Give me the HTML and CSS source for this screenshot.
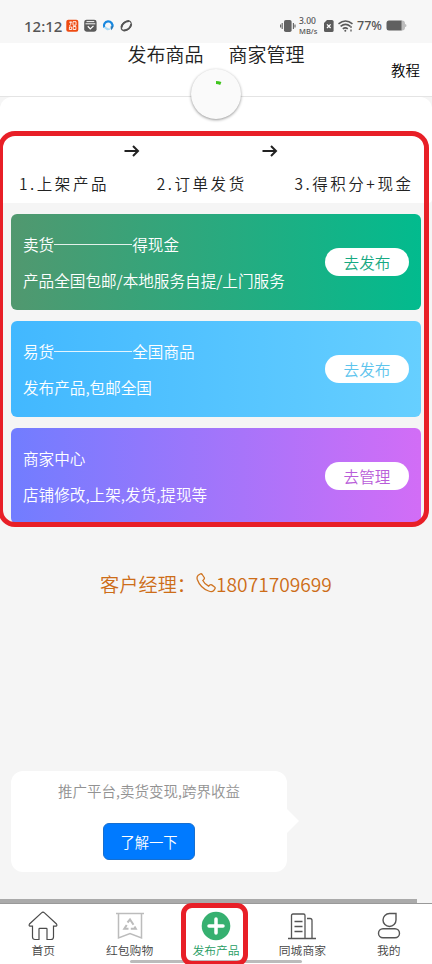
FILE: index.html
```html
<!DOCTYPE html>
<html lang="zh-CN">
<head>
<meta charset="utf-8">
<title>发布产品</title>
<link rel="stylesheet" href="styles.css">
</head>
<body>
<div class="screen">
  <div class="status">
    <span class="time">12:12</span>
    <svg class="status-left" width="68" height="14" viewBox="0 0 68 14">
      <rect x="0.3" y="0.7" width="12" height="12" rx="2" fill="#ee4b12"/>
      <g fill="none" stroke="#fff" stroke-width="0.9"><path d="M3.2 3.2H6M4.8 2.5v3.3L3 7.3M7 2.7v3.5h3V2.700zM3.500 8h2.200v2.500H3.300zM7.200 7.500h2.700v3H7.200z"/></g>
      <rect x="18.2" y="0.7" width="12.4" height="12" rx="2.4" fill="#5b5b5b"/>
      <path d="M20.5 2.6h7.8M19.5 4.8h9.8" stroke="#f7f7f7" stroke-width="1"/>
      <path d="M21.8 7.3l2.5 2.6 3.2-3" fill="none" stroke="#fff" stroke-width="1.3"/>
      <path d="M38.300 8.500A4.300 4.300 0 1 1 46.300 8" fill="none" stroke="#1787df" stroke-width="2.200"/>
      <path d="M37.500 8.500q1.500-1.700 3.500 0 2 1.700 4.500.500-1.700 2.900-4.900 2.100z" fill="#a8dbf7"/>
      <path d="M44.500 7.500l2.700-.5q.3 2.700-2 4.300z" fill="#2878b8"/>
      <g fill="none" stroke="#555"><ellipse cx="60.300" cy="6.800" rx="5.800" ry="3.900" transform="rotate(-43 60.300 6.800)" stroke-width="1.200"/><path d="M55.500 8.500C56 5 59 2.300 63 2M65.200 5.200C64.700 8.600 61.600 11.300 57.600 11.600" stroke-width="2"/></g>
    </svg>
    <svg class="vibrate" width="16" height="14" viewBox="0 0 16 14"><rect x="4" y="1" width="7.6" height="12" rx="1.8" fill="#626262"/><path d="M2.2 4v6M.6 5.5v3M13.4 4v6M15 5.5v3" stroke="#626262" stroke-width="1.1"/></svg>
    <span class="speed"><span>3.00</span><span>MB/s</span></span>
    <svg class="signal" width="30" height="14" viewBox="0 0 30 14"><path d="M1 4l3-3h5q1.600 0 1.600 1.600v8.800q0 1.600-1.600 1.600H2.600Q1 13 1 11.400z" fill="#5c5c5c"/><path d="M4 5.400l3.600 3.600M7.600 5.400l-3.600 3.600" stroke="#fff" stroke-width="1.300"/><g fill="none" stroke="#5a5a5a" stroke-width="1.600"><path d="M15.500 4.800q7-5.600 14 0M17.600 7.400q4.900-4 9.800 0M19.800 9.900q2.500-2 5 0"/></g><circle cx="22.300" cy="11.700" r="1" fill="#5a5a5a"/><path d="M28 7v2M28 10.500v2" stroke="#5a5a5a" stroke-width="1.300"/></svg>
    <span class="percent">77%</span>
    <svg class="battery" width="21" height="11" viewBox="0 0 21 11"><path d="M15 .5h1q3 0 3 3v.5q1.500 0 1.500 1.500T19 7v.5q0 3-3 3h-1z" fill="#bcbcbc"/><path d="M3 .500h12.500v10H3q-2.500 0-2.500-2.500V3Q.500.500 3 .500z" fill="#606060"/></svg>
  </div>
  <header class="header">
    <div class="tabs"><span>发布商品</span><span>商家管理</span></div>
    <a class="tutorial">教程</a>
    <div class="loader"><svg width="50" height="50" viewBox="0 0 50 50"><path d="M25 13.500q2.500 0 4.800 1" fill="none" stroke="#3fc51d" stroke-width="3"/></svg></div>
  </header>
  <section class="steps">
    <div class="arrows">
      <svg width="16" height="12" viewBox="0 0 16 12"><path d="M.5 6H14M9 1l5 5-5 5" fill="none" stroke="#222" stroke-width="2"/></svg>
      <svg width="16" height="12" viewBox="0 0 16 12"><path d="M.5 6H14M9 1l5 5-5 5" fill="none" stroke="#222" stroke-width="2"/></svg>
    </div>
    <div class="labels"><span>1.上架产品</span><span>2.订单发货</span><span>3.得积分+现金</span></div>
  </section>
  <main class="cards">
    <section class="card green"><div><p>卖货<i class="dash"></i>得现金</p><p>产品全国包邮/本地服务自提/上门服务</p></div><a class="pill">去发布</a></section>
    <section class="card blue"><div><p>易货<i class="dash"></i>全国商品</p><p>发布产品,包邮全国</p></div><a class="pill">去发布</a></section>
    <section class="card purple"><div><p>商家中心</p><p>店铺修改,上架,发货,提现等</p></div><a class="pill">去管理</a></section>
  </main>
  <div class="contact"><span>客户经理：</span><svg width="20" height="20" viewBox="0 0 20 20"><path d="M2.200 2.200L4.200 1q1.200-.6 2 .5l2 3q.6 1-.3 1.900L6.800 7.500q2 3.800 5.800 5.700l1.200-1.200q.9-.8 1.900-.1l2.900 2q1 .8.300 1.900l-1.300 2q-1.600 1.600-5 .2Q4.200 14.800 1.300 6.500.500 3.700 2.200 2.200z" fill="none" stroke="#cf7320" stroke-width="1.300"/></svg><span>18071709699</span></div>
  <section class="bubble"><p>推广平台,卖货变现,跨界收益</p><a class="learn">了解一下</a></section>
  <div class="progress"></div>
  <nav class="nav">
    <a class="item"><svg width="30" height="30" viewBox="0 0 30 30"><path d="M15 1.200q.8 0 1.500.7L28.500 13q1 1.500-.5 2.200h-2.500V26q0 2.500-2.500 2.500h-4V18q0-.7-.7-.7h-6.600q-.7 0-.7.700v10.500H7q-2.500 0-2.500-2.500V15.200H2q-1.500-.7-.5-2.200l12-11.100q.7-.7 1.500-.7z" fill="none" stroke="#4b4b4b" stroke-width="1.200"/></svg><span>首页</span></a>
    <a class="item"><svg width="30" height="30" viewBox="0 0 30 30"><g fill="none" stroke="#bcbcbc"><path d="M1 2.500h28" stroke-width="1.500"/><path d="M3.500 2.500V27L15 22.500 26.500 27V2.500" stroke-width="1.500"/><path d="M12.500 11.500l2.500-3 3.500 5.300M19.500 15.500l1.300 2.200h-5M13.500 17.700H9.300l2.400-3.700" stroke-width="2"/></g></svg><span>红包购物</span></a>
    <a class="item active"><svg width="30" height="30" viewBox="0 0 30 30"><circle cx="15" cy="15" r="14.300" fill="#36b070"/><path d="M15 8v14M8 15h14" stroke="#fff" stroke-width="3.500" stroke-linecap="round"/></svg><span>发布产品</span></a>
    <a class="item"><svg width="30" height="30" viewBox="0 0 30 30"><g fill="none" stroke="#555" stroke-width="1.300"><path d="M1 27.500h28M4.500 27.500v-23q0-1.500 1.500-1.500h10.500Q18 3 18 4.500v23M20 7.500h3q2 0 2 2v18M7.500 10.500h8M7.500 15.500h8M7.500 20.500h8"/></g></svg><span>同城商家</span></a>
    <a class="item"><svg width="30" height="30" viewBox="0 0 30 30"><g fill="none" stroke="#555" stroke-width="1.400"><path d="M22 2.500v6.500a6.500 6.500 0 1 1-6.500-6.500z"/><rect x="4.500" y="17.700" width="21" height="9" rx="4.500"/></g></svg><span>我的</span></a>
    <div class="indicator"></div>
  </nav>
  <div class="mark mark-main"></div>
  <div class="mark mark-tab"></div>
</div>
</body>
</html>
```
FILE: styles.css
```css
* { box-sizing: border-box; }
body, p { margin: 0; }
body { background: #f5f5f5; font-family: "Noto Sans CJK SC", sans-serif; font-weight: 350; color: #222; }
svg { display: block; flex: none; }
.screen { position: relative; width: 432px; height: 964px; overflow: hidden; display: flex; flex-direction: column; background: #f5f5f5; }
.screen > * { flex-shrink: 0; }

.status { height: 43px; background: #f7f7f7; padding: 8px 24px 0 24px; display: flex; align-items: center; color: #555; }
.time { font: 500 15px/20px "Noto Sans", sans-serif; width: 42px; white-space: nowrap; }
.vibrate { margin-left: 146px; }
.speed { display: flex; flex-direction: column; justify-content: space-between; height: 18px; width: 20px; margin-left: 3px; font: 500 7.500px/8px "Noto Sans", sans-serif; }
.speed span:first-child { font-size: 8.500px; line-height: 8px; }
.signal { margin-left: 4px; }
.percent { font: 500 12.500px/20px "Noto Sans", sans-serif; margin-left: 4px; width: 29px; }
.battery { flex: none; }

.header { position: relative; height: 54px; background: #fff; border-bottom: 1px solid #e4e4e4; }
.tabs { display: flex; justify-content: center; gap: 25px; font-size: 19px; line-height: 21px; }
.tutorial { position: absolute; right: 12px; top: 17px; font-size: 14.500px; line-height: 20px; color: #000; }
.loader { position: absolute; left: 191px; top: 26px; width: 50px; height: 50px; border-radius: 50%; background: #fafafa; box-shadow: 0 1px 3px rgba(0,0,0,.42); z-index: 2; }

.steps { height: 106px; background: #fff; border-radius: 12px 12px 4px 4px; padding: 48px 18.500px 0 19px; }
.arrows { display: flex; gap: 122px; padding-left: 105px; }
.labels { display: flex; justify-content: space-between; margin-top: 16px; font-size: 15.500px; line-height: 20px; letter-spacing: 2.550px; white-space: nowrap; }

.cards { padding: 11px 11px 0; display: flex; flex-direction: column; gap: 11px; }
.card { height: 96px; border-radius: 6px; padding: 12px; display: flex; justify-content: space-between; align-items: center; color: #fff; font-size: 15.600px; line-height: 36px; white-space: nowrap; }
.green { background: linear-gradient(90deg, #51986f, #02bb8e); }
.blue { background: linear-gradient(90deg, #42b8ff, #66cfff); }
.purple { background: linear-gradient(90deg, #717dff, #d26df6); }
.dash { display: inline-block; width: 78px; height: 1px; background: rgba(255,255,255,.85); vertical-align: 6px; }
.pill { width: 84px; height: 28px; border-radius: 14px; background: #fff; text-align: center; line-height: 29px; }
.green .pill { color: #16a982; }
.blue .pill { color: #5dc4ed; }
.purple .pill { color: #b95dd9; }

.contact { display: flex; justify-content: center; align-items: center; height: 30px; margin-top: 45px; font-size: 19.200px; line-height: 30px; color: #cd6d18; }
.contact svg { margin-top: -2px; }

.bubble { position: relative; width: 276px; height: 101px; margin: 172px 0 0 11px; border-radius: 12px; background: #fff; display: flex; flex-direction: column; align-items: center; padding-top: 10px; color: #929292; font-size: 14.500px; line-height: 20px; }
.bubble::after { content: ""; position: absolute; left: 276px; top: 38px; border: solid transparent; border-width: 12px 0 12px 12px; border-left-color: #fff; }
.learn { width: 92px; height: 37px; margin-top: 22px; border: 1px solid #176fd0; border-radius: 6px; background: #007aff; color: #fff; text-align: center; line-height: 35px; font-size: 14.300px; }

.progress { width: 417px; height: 4px; margin-top: 27px; background: #aaa; }
.nav { position: relative; height: 61px; border-top: 1px solid #999; background: #fff; display: flex; }
.item { flex: 1; display: flex; flex-direction: column; align-items: center; padding-top: 7px; color: #444; font-size: 11.800px; line-height: 18px; }
.active { color: #269c62; }
.indicator { position: absolute; left: 130px; top: 56px; width: 172px; height: 3px; border-radius: 2px; background: #bbb; }

.mark { position: absolute; border: 5px solid #e81f27; pointer-events: none; }
.mark-main { left: -2px; top: 131px; width: 431px; height: 396px; border-radius: 17px; }
.mark-tab { left: 181px; top: 903px; width: 67px; height: 63px; border-radius: 11px; }
```
